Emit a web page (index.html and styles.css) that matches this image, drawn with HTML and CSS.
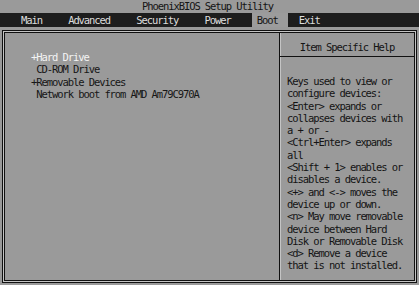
FILE: index.html
```html
<!DOCTYPE html>
<html lang="en">
<head>
    <meta charset="UTF-8">
    <meta name="viewport" content="width=device-width, initial-scale=1.0">
    <title>PhoenixBIOS Setup Utility</title>
    <link rel="stylesheet" href="styles.css">
</head>
<body>
    <div class="bios">
        <div class="title">PhoenixBIOS Setup Utility</div>

        <div class="menu"><span>    Main     Advanced     Security     Power    </span><span class="tab"> Boot  </span><span>  Exit</span></div>

        <div class="frame">
            <div class="boot-list">
                <div class="item selected">+Hard Drive</div>
                <div class="item"> CD-ROM Drive</div>
                <div class="item">+Removable Devices</div>
                <div class="item"> Network boot from AMD Am79C970A</div>
            </div>

            <div class="help">
                <div class="help-title">Item Specific Help</div>
                <div class="help-text">Keys used to view or
configure devices:
&lt;Enter&gt; expands or
collapses devices with
a + or -
&lt;Ctrl+Enter&gt; expands
all
&lt;Shift + 1&gt; enables or
disables a device.
&lt;+&gt; and &lt;-&gt; moves the
device up or down.
&lt;n&gt; May move removable
device between Hard
Disk or Removable Disk
&lt;d&gt; Remove a device
that is not installed.</div>
            </div>
        </div>
    </div>
</body>
</html>
```

FILE: styles.css
```css
html, body {
    margin: 0;
    padding: 0;
}

body {
    background-color: #9a9a9a;
    color: #141414;
    font-family: 'DejaVu Sans Mono', 'Liberation Mono', monospace;
    font-size: 10.5px;
    letter-spacing: -1.08px;
    line-height: 12.3px;
}

.bios {
    width: 419px;
    height: 285px;
    overflow: hidden;
}

.title {
    height: 13px;
    line-height: 13px;
    text-align: center;
    padding-right: 4px;
}

.menu {
    height: 14px;
    line-height: 14px;
    background-color: #1d1d1d;
    color: #dcdcdc;
    white-space: pre;
}

.menu .tab {
    display: inline-block;
    background-color: #9c9c9c;
    color: #141414;
}

.frame {
    box-sizing: border-box;
    height: 253px;
    margin: 3px 2px 0;
    padding: 2px;
    border: 1px solid #111;
    box-shadow: inset 0 0 0 1px #c4c4c4, inset 0 0 0 2px #111;
    display: grid;
    grid-template-columns: 274px 1fr;
}

.boot-list {
    padding: 18px 0 0 26px;
}

.item {
    white-space: pre;
    color: #161616;
}

.item.selected {
    color: #f4f4f4;
}

.help {
    border-left: 1px solid #111;
    box-shadow: inset 1px 0 0 #c4c4c4;
}

.help-title {
    box-sizing: border-box;
    height: 24px;
    padding-top: 8px;
    text-align: center;
    border-bottom: 1px solid #111;
}

.help-text {
    padding: 18px 0 0 7px;
    white-space: pre;
}
```
